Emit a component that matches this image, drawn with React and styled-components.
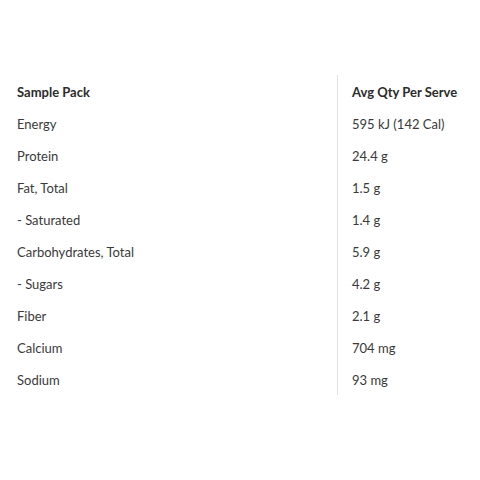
import React from 'react'
import styled, { createGlobalStyle } from 'styled-components'

const rows = [
  ['Energy', '595 kJ (142 Cal)'],
  ['Protein', '24.4 g'],
  ['Fat, Total', '1.5 g'],
  ['- Saturated', '1.4 g'],
  ['Carbohydrates, Total', '5.9 g'],
  ['- Sugars', '4.2 g'],
  ['Fiber', '2.1 g'],
  ['Calcium', '704 mg'],
  ['Sodium', '93 mg'],
]

const App = () => {
  return (
    <Page>
      <GlobalStyle />
      <Table>
        <tbody>
          <Row>
            <Cell $head>Sample Pack</Cell>
            <Cell $head $right>Avg Qty Per Serve</Cell>
          </Row>
          {rows.map(([name, qty]) => (
            <Row key={name}>
              <Cell>{name}</Cell>
              <Cell $right>{qty}</Cell>
            </Row>
          ))}
        </tbody>
      </Table>
    </Page>
  )
}

export default App

const GlobalStyle = createGlobalStyle`
  body {
    margin: 0;
    background: #fff;
    font-family: Lato, "Open Sans", sans-serif;
  }
`

const Page = styled.div`
  width: 480px;
  height: 480px;
  padding: 75px 8px 0;
  box-sizing: border-box;
`

const Table = styled.table`
  width: 100%;
  border-collapse: collapse;
  table-layout: fixed;
`

const Row = styled.tr`
  height: 32px;
`

const Cell = styled.td`
  padding: 2px 0 0 ${(p) => (p.$right ? '14px' : '9px')};
  width: ${(p) => (p.$right ? 'auto' : '320px')};
  border-left: ${(p) => (p.$right ? '1px solid #e0e0e0' : 'none')};
  font-size: 13px;
  line-height: 16px;
  font-weight: ${(p) => (p.$head ? 700 : 400)};
  color: ${(p) => (p.$head ? '#2b2b2b' : '#3a3a3a')};
  vertical-align: middle;
  white-space: nowrap;
`
